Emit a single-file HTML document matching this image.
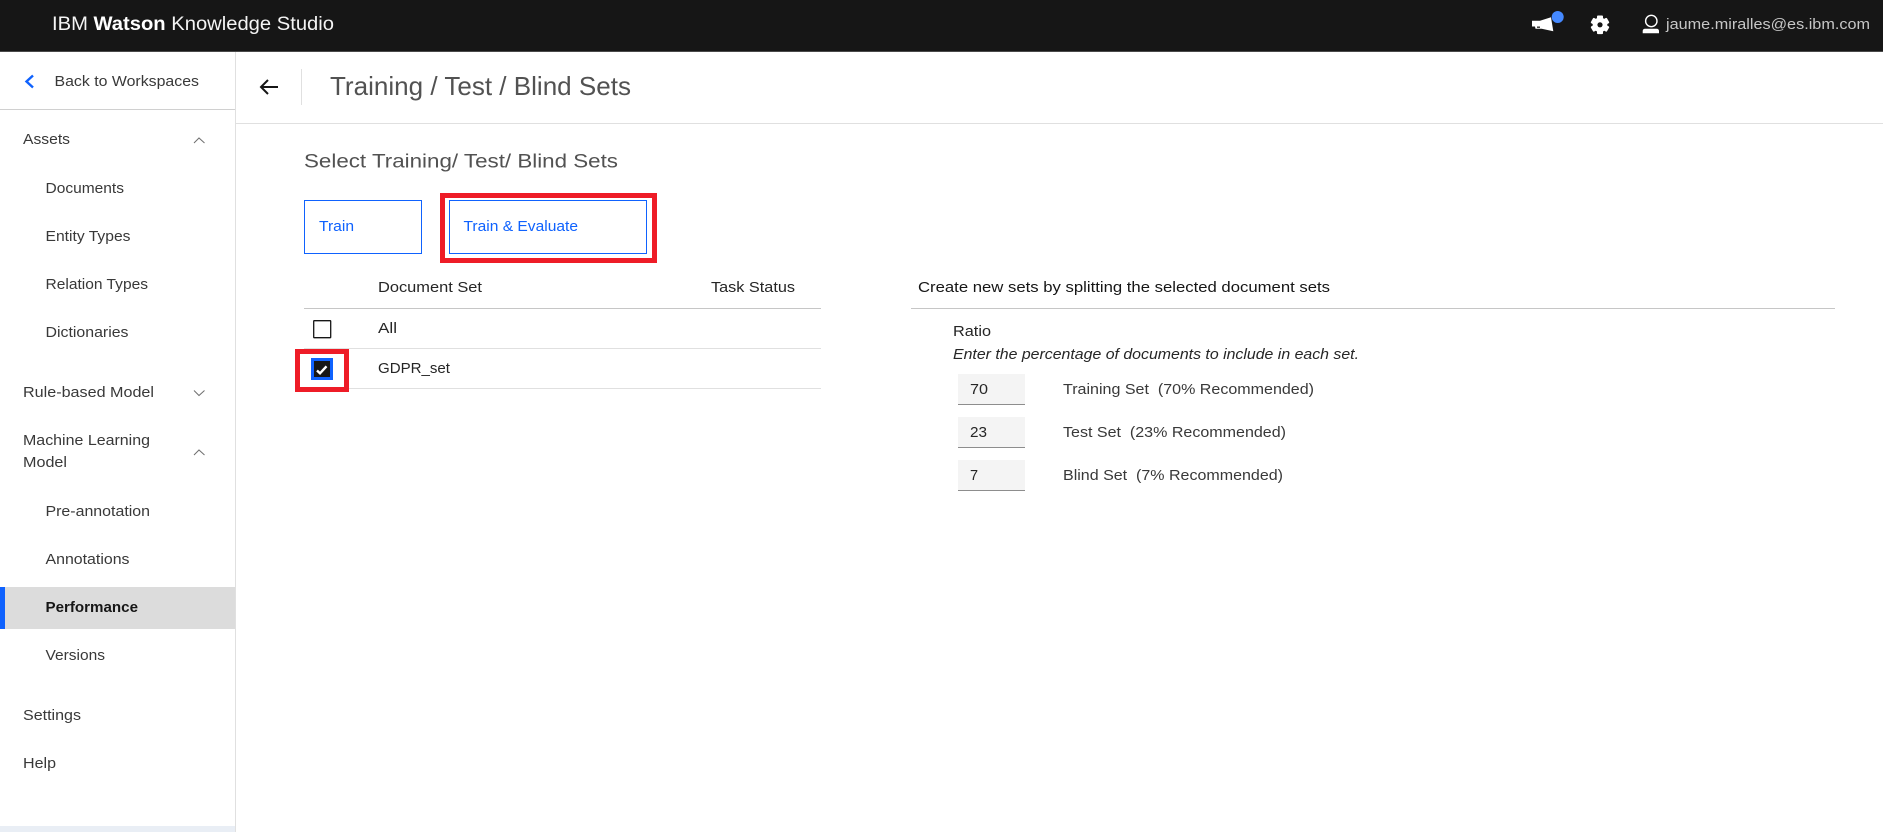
<!DOCTYPE html>
<html lang="en">
<head>
<meta charset="utf-8">
<title>IBM Watson Knowledge Studio</title>
<style>
html,body{margin:0;padding:0;background:#fff;width:1883px;height:832px;overflow:hidden}
svg{display:block}
text{font-family:"Liberation Sans",sans-serif;font-size:14px;fill:#262626}
.s{font-size:14.5px;fill:#393939}
.m{font-size:14.5px;fill:#262626}
.b{fill:#0f62fe;font-size:14.5px}
</style>
</head>
<body>
<svg width="1883" height="832" viewBox="0 0 1883 832" xmlns="http://www.w3.org/2000/svg">
<rect width="1883" height="832" fill="#fff"/>
<!-- top bar -->
<rect width="1883" height="51" fill="#161616"/>
<rect y="51" width="1883" height="1" fill="#4a4a4a"/>
<text x="52" y="30" style="font-size:19px;fill:#f4f4f4" textLength="282" lengthAdjust="spacingAndGlyphs">IBM <tspan font-weight="700" style="fill:#fff">Watson</tspan> Knowledge Studio</text>
<!-- megaphone -->
<path d="M1532 20.700L1540 20.700L1551 17.300L1553.300 31.300L1541.700 28.700H1535.500L1535 26.500H1532Z" fill="#fff"/>
<rect x="1537" y="26.500" width="3" height="1.400" fill="#333"/>
<circle cx="1557.700" cy="17" r="6" fill="#4589ff"/>
<!-- gear -->
<g fill="#fff" transform="translate(1600 24.800)">
<circle r="7.300"/>
<rect x="-3" y="-9.300" width="6" height="18.600" rx="1"/>
<rect x="-3" y="-9.300" width="6" height="18.600" rx="1" transform="rotate(60)"/>
<rect x="-3" y="-9.300" width="6" height="18.600" rx="1" transform="rotate(120)"/>
<circle r="2.600" fill="#161616"/>
</g>
<!-- user -->
<circle cx="1651.300" cy="21" r="5.700" fill="none" stroke="#fff" stroke-width="1.400"/>
<path d="M1642.700 33.300V31C1642.700 29.500 1643.700 28.700 1645 28.700H1656.700C1658 28.700 1659 29.500 1659 31V33.300Z" fill="#fff"/>
<text x="1666" y="29" style="font-size:15px;fill:#c6c6c6" textLength="204" lengthAdjust="spacingAndGlyphs">jaume.miralles@es.ibm.com</text>

<!-- sidebar -->
<rect x="235" y="52" width="1" height="780" fill="#e0e0e0"/>
<rect x="0" y="109" width="235" height="1" fill="#d0d0d0"/>
<path d="M33 75.500L26.500 81.500L33 87.500" fill="none" stroke="#0f62fe" stroke-width="2.400"/>
<text class="s" x="54.500" y="86" textLength="144.500" lengthAdjust="spacingAndGlyphs">Back to Workspaces</text>
<text class="s" x="23" y="144" textLength="47" lengthAdjust="spacingAndGlyphs">Assets</text>
<path d="M194 143L199 138L204.500 143" fill="none" stroke="#6f6f6f" stroke-width="1"/>
<text class="s" x="45.500" y="193" textLength="78.500" lengthAdjust="spacingAndGlyphs">Documents</text>
<text class="s" x="45.500" y="241" textLength="85" lengthAdjust="spacingAndGlyphs">Entity Types</text>
<text class="s" x="45.500" y="289" textLength="102.500" lengthAdjust="spacingAndGlyphs">Relation Types</text>
<text class="s" x="45.500" y="337" textLength="83" lengthAdjust="spacingAndGlyphs">Dictionaries</text>
<text class="s" x="23" y="397" textLength="131" lengthAdjust="spacingAndGlyphs">Rule-based Model</text>
<path d="M194 390.500L199 395.500L204.500 390.500" fill="none" stroke="#6f6f6f" stroke-width="1"/>
<text class="s" x="23" y="445" textLength="127" lengthAdjust="spacingAndGlyphs">Machine Learning</text>
<text class="s" x="23" y="467" textLength="44" lengthAdjust="spacingAndGlyphs">Model</text>
<path d="M194 455L199 450L204.500 455" fill="none" stroke="#6f6f6f" stroke-width="1"/>
<text class="s" x="45.500" y="516" textLength="104.500" lengthAdjust="spacingAndGlyphs">Pre-annotation</text>
<text class="s" x="45.500" y="564" textLength="84" lengthAdjust="spacingAndGlyphs">Annotations</text>
<rect x="0" y="587" width="235" height="42" fill="#dcdcdc"/>
<rect x="0" y="587" width="5" height="42" fill="#0f62fe"/>
<text x="45.500" y="612" style="font-size:14.500px;font-weight:700;fill:#161616" textLength="92.500" lengthAdjust="spacingAndGlyphs">Performance</text>
<text class="s" x="45.500" y="660" textLength="59.500" lengthAdjust="spacingAndGlyphs">Versions</text>
<text class="s" x="23" y="720" textLength="58" lengthAdjust="spacingAndGlyphs">Settings</text>
<text class="s" x="23" y="768" textLength="33" lengthAdjust="spacingAndGlyphs">Help</text>
<rect x="0" y="826" width="235" height="6" fill="#e9eef5"/>

<!-- page header -->
<path d="M278 87H261.500M268 80L261 87L268 94" fill="none" stroke="#161616" stroke-width="2"/>
<rect x="301" y="69" width="1" height="36" fill="#e0e0e0"/>
<rect x="236" y="123" width="1647" height="1" fill="#e0e0e0"/>
<text x="330" y="95" style="font-size:26px;fill:#525252" textLength="301" lengthAdjust="spacingAndGlyphs">Training / Test / Blind Sets</text>
<text x="304" y="167.500" style="font-size:19.500px;fill:#525252" textLength="314" lengthAdjust="spacingAndGlyphs">Select Training/ Test/ Blind Sets</text>

<!-- buttons -->
<rect x="304.500" y="200.500" width="117" height="53" fill="#fff" stroke="#0f62fe" stroke-width="1"/>
<text class="b" x="319" y="231" textLength="35" lengthAdjust="spacingAndGlyphs">Train</text>
<rect x="449.500" y="200.500" width="197" height="53" fill="#fff" stroke="#0f62fe" stroke-width="1"/>
<text class="b" x="463.500" y="231" textLength="114.500" lengthAdjust="spacingAndGlyphs">Train &amp; Evaluate</text>
<rect x="442.500" y="195.500" width="212" height="65" fill="none" stroke="#ee1c27" stroke-width="5"/>

<!-- table -->
<text class="m" x="378" y="292" textLength="104" lengthAdjust="spacingAndGlyphs">Document Set</text>
<text class="m" x="711" y="292" textLength="84" lengthAdjust="spacingAndGlyphs">Task Status</text>
<rect x="304" y="308" width="517" height="1" fill="#c6c6c6"/>
<rect x="313.700" y="320.700" width="17" height="17" fill="#fff" stroke="#161616" stroke-width="1.300" rx="0.500"/>
<text class="m" x="378" y="333" textLength="19" lengthAdjust="spacingAndGlyphs">All</text>
<rect x="304" y="348" width="517" height="1" fill="#e0e0e0"/>
<text class="m" x="378" y="373" textLength="72" lengthAdjust="spacingAndGlyphs">GDPR_set</text>
<rect x="304" y="388" width="517" height="1" fill="#e0e0e0"/>
<rect x="297.500" y="351.500" width="49" height="38" fill="#fff" stroke="#ee1c27" stroke-width="5"/>
<rect x="311" y="358" width="22" height="22" fill="#0f62fe"/>
<rect x="314" y="361" width="16" height="16" fill="#161616"/>
<path d="M317 370.500L320 373.300L326.500 366.300" fill="none" stroke="#fff" stroke-width="2.400"/>

<!-- right panel -->
<text class="m" x="918" y="292" style="fill:#161616" textLength="412" lengthAdjust="spacingAndGlyphs">Create new sets by splitting the selected document sets</text>
<rect x="911" y="308" width="924" height="1" fill="#c6c6c6"/>
<text class="m" x="953" y="336" textLength="38" lengthAdjust="spacingAndGlyphs">Ratio</text>
<text class="m" x="953" y="359" style="font-style:italic" textLength="406" lengthAdjust="spacingAndGlyphs">Enter the percentage of documents to include in each set.</text>

<rect x="958" y="374" width="67" height="30" fill="#f4f4f4"/><rect x="958" y="404" width="67" height="1" fill="#8d8d8d"/>
<text class="m" x="970" y="394" textLength="18" lengthAdjust="spacingAndGlyphs">70</text>
<text class="s" x="1063" y="394" textLength="251" lengthAdjust="spacingAndGlyphs" xml:space="preserve">Training Set  (70% Recommended)</text>

<rect x="958" y="417" width="67" height="30" fill="#f4f4f4"/><rect x="958" y="447" width="67" height="1" fill="#8d8d8d"/>
<text class="m" x="970" y="437" textLength="17" lengthAdjust="spacingAndGlyphs">23</text>
<text class="s" x="1063" y="437" textLength="223" lengthAdjust="spacingAndGlyphs" xml:space="preserve">Test Set  (23% Recommended)</text>

<rect x="958" y="460" width="67" height="30" fill="#f4f4f4"/><rect x="958" y="490" width="67" height="1" fill="#8d8d8d"/>
<text class="m" x="970" y="480">7</text>
<text class="s" x="1063" y="480" textLength="220" lengthAdjust="spacingAndGlyphs" xml:space="preserve">Blind Set  (7% Recommended)</text>
</svg>
</body>
</html>
